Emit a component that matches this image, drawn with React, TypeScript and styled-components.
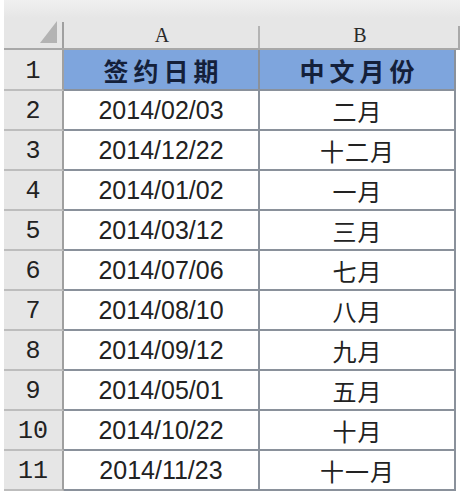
import React from "react";
import styled, { createGlobalStyle } from "styled-components";

const Global = createGlobalStyle`
  html, body { margin: 0; padding: 0; background: #ffffff; }
  body { width: 466px; height: 496px; overflow: hidden; }
`;

const Sheet = styled.div`
  display: grid;
  grid-template-columns: 60px 196px 196px;
  grid-template-rows: 50px 41px repeat(10, 40px);
  margin-left: 4px;
`;

const Corner = styled.div`
  position: relative;
  background: linear-gradient(#f0f0f0 0px, #e6e6e6 18px);
  border-bottom: 2px solid #a8a8a8;
  display: flex;
  justify-content: flex-end;
  align-items: flex-end;
  padding: 0 6px 5px 0;
  box-sizing: border-box;
  &::after {
    content: "";
    position: absolute;
    right: 0;
    top: 22px;
    bottom: 0;
    width: 2px;
    background: #a0a0a0;
  }
`;

const ColHead = styled.div<{ $last?: boolean }>`
  position: relative;
  background: linear-gradient(#f0f0f0 0px, #e6e6e6 18px);
  border-bottom: 2px solid #a8a8a8;
  display: flex;
  justify-content: center;
  align-items: flex-end;
  padding-bottom: 1px;
  box-sizing: border-box;
  font-family: "Liberation Serif", "DejaVu Serif", serif;
  font-size: 20px;
  color: #2a2a2a;
  margin-right: ${(p) => (p.$last ? "-4px" : "0")};
  &::after {
    content: "";
    position: absolute;
    right: 0;
    top: 26px;
    bottom: 0;
    width: 2px;
    background: ${(p) => (p.$last ? "#a9a9a9" : "#b4b4b4")};
  }
`;

const RowHead = styled.div`
  background: #e6e6e6;
  border-right: 2px solid #a0a0a0;
  border-bottom: 2px solid #bdbdbd;
  box-sizing: border-box;
  display: flex;
  justify-content: center;
  align-items: center;
  padding-top: 3px;
  font-family: "Liberation Mono", "DejaVu Sans Mono", monospace;
  font-size: 25px;
  color: #222;
`;

const Cell = styled.div<{ $head?: boolean; $cjk?: boolean }>`
  background: ${(p) => (p.$head ? "#7ea5dd" : "#ffffff")};
  border-right: 2px solid #8a919b;
  border-bottom: 2px solid #8a919b;
  box-sizing: border-box;
  display: flex;
  justify-content: center;
  align-items: center;
  color: ${(p) => (p.$head ? "#14203a" : "#222")};
  font-family: ${(p) =>
    p.$head || p.$cjk
      ? `"Noto Sans CJK SC", "Noto Sans", sans-serif`
      : `"Liberation Sans", Arial, sans-serif`};
  font-size: ${(p) => (p.$head ? "25px" : p.$cjk ? "24px" : "25px")};
  font-weight: ${(p) => (p.$head ? 700 : 400)};
  letter-spacing: ${(p) => (p.$head ? "5px" : p.$cjk ? "1px" : "0")};
  padding-left: ${(p) => (p.$head ? "5px" : p.$cjk ? "1px" : "0")};
`;

const rows: [string, string][] = [
  ["2014/02/03", "二月"],
  ["2014/12/22", "十二月"],
  ["2014/01/02", "一月"],
  ["2014/03/12", "三月"],
  ["2014/07/06", "七月"],
  ["2014/08/10", "八月"],
  ["2014/09/12", "九月"],
  ["2014/05/01", "五月"],
  ["2014/10/22", "十月"],
  ["2014/11/23", "十一月"],
];

export default function App() {
  return (
    <>
      <Global />
      <Sheet>
        <Corner>
          <svg width="18" height="22" viewBox="0 0 18 22">
            <polygon points="17,0 17,22 0,22" fill="#b3b3b3" />
          </svg>
        </Corner>
        <ColHead>A</ColHead>
        <ColHead $last>B</ColHead>

        <RowHead>1</RowHead>
        <Cell $head>签约日期</Cell>
        <Cell $head>中文月份</Cell>

        {rows.map(([d, m], i) => (
          <React.Fragment key={d}>
            <RowHead>{i + 2}</RowHead>
            <Cell>{d}</Cell>
            <Cell $cjk>{m}</Cell>
          </React.Fragment>
        ))}
      </Sheet>
    </>
  );
}
